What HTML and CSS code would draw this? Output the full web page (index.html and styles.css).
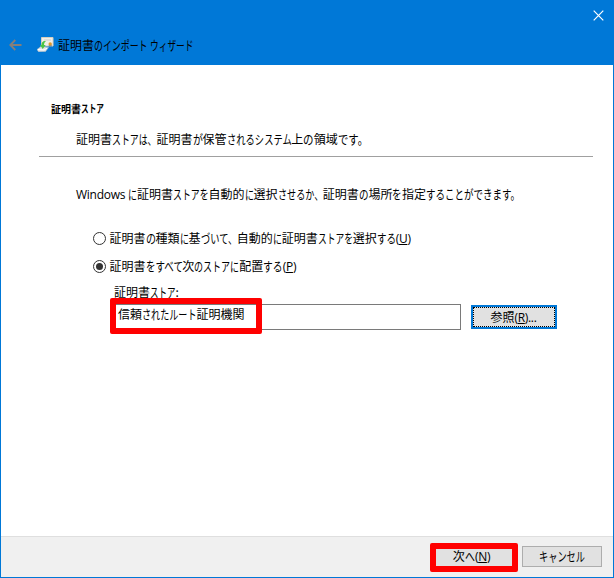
FILE: index.html
```html
<!DOCTYPE html>
<html lang="ja">
<head>
<meta charset="utf-8">
<title>証明書のインポート ウィザード</title>
<link rel="stylesheet" href="styles.css">
</head>
<body>
<div class="window">
  <header class="titlebar">
    <svg class="close" viewBox="0 0 11 11"><path d="M.7.7l9.6 9.6M10.3.7L.7 10.3"/></svg>
    <div class="caption">
      <svg class="back" viewBox="0 0 13 12"><path d="M12.5 6H1.5M6.3 1L1.3 6l5 5"/></svg>
      <svg class="cert" viewBox="0 0 17 16">
        <path d="M4.500 1.500h11.500v8.500H4.500z" fill="#f1efe8" stroke="#d6cfc0"/>
        <path d="M7 4h7" stroke="#d0cfca"/>
        <path d="M12 8.500l-.5 2.500h3.500l-.5-2.500z" fill="#5b8fb5"/>
        <circle cx="13.200" cy="8" r="1.700" fill="#e0992a"/>
        <path d="M0 13.500l4-3 7.500 1-3 4-7 .2z" fill="#dfe3e6" stroke="#b8c0c6" stroke-width=".5"/>
        <path d="M1 13.500l6 .5 3-1.800" fill="none" stroke="#fff"/>
        <path d="M8 5C5.500 5 4.500 7 4.500 9H3l2.700 4 3-4H7C7 7.500 7.300 6.300 9 5.300z" fill="#4cc446"/>
      </svg>
      <div class="text">証明書<span class="kana" style="--n:6;--w:53.5">のインポート</span> <span class="kana" style="--n:5;--w:43.5">ウィザード</span></div>
    </div>
  </header>
  <main class="page">
    <h1 class="text heading">証明書<span class="kana" style="--n:3;--w:23">ストア</span></h1>
    <p class="text summary">証明書<span class="kana" style="--n:5;--w:44.5">ストアは、</span>証明書<span class="kana" style="--n:1;--w:10">が</span>保管<span class="kana" style="--n:7;--w:65">されるシステム</span>上<span class="kana" style="--n:1;--w:10.5">の</span>領域<span class="kana" style="--n:3;--w:31">です。</span></p>
    <hr class="rule">
    <p class="text lead"><span class="windows">Windows</span><span class="kana" style="--n:1;--w:9">に</span>証明書<span class="kana" style="--n:4;--w:35.5">ストアを</span>自動的<span class="kana" style="--n:1;--w:9">に</span>選択<span class="kana" style="--n:5;--w:45.5">させるか、</span>証明書<span class="kana" style="--n:1;--w:9.5">の</span>場所<span class="kana" style="--n:1;--w:9.5">を</span>指定<span class="kana" style="--n:10;--w:95">することができます。</span></p>
    <div class="options">
      <label class="option"><span class="radio"></span><span class="text">証明書<span class="kana" style="--n:1;--w:10">の</span>種類<span class="kana" style="--n:1;--w:9">に</span>基<span class="kana" style="--n:4;--w:37">づいて、</span>自動的<span class="kana" style="--n:1;--w:9">に</span>証明書<span class="kana" style="--n:4;--w:35">ストアを</span>選択<span class="kana" style="--n:2;--w:19">する</span><span class="key">(<u>U</u>)</span></span></label>
      <label class="option"><span class="radio checked"></span><span class="text">証明書<span class="kana" style="--n:4;--w:38">をすべて</span>次<span class="kana" style="--n:5;--w:45">のストアに</span>配置<span class="kana" style="--n:2;--w:19.5">する</span><span class="key">(<u>P</u>)</span></span></label>
    </div>
    <div class="store">
      <div class="text store-label">証明書<span class="kana" style="--n:3;--w:25.5">ストア</span>:</div>
      <div class="row">
        <div class="field"><span class="text">信頼<span class="kana" style="--n:6;--w:54.5">されたルート</span>証明機関</span><span class="mark mark-field"></span></div>
        <div class="button browse"><span class="text">参照<span class="key">(<u>R</u>)...</span></span></div>
      </div>
    </div>
  </main>
  <footer class="actions">
    <div class="button next"><span class="text">次<span class="kana" style="--n:1;--w:10">へ</span><span class="key">(<u>N</u>)</span></span><span class="mark mark-next"></span></div>
    <div class="button"><span class="text"><span class="kana" style="--n:5;--w:46">キャンセル</span></span></div>
  </footer>
</div>
</body>
</html>
```
FILE: styles.css
```css
* { box-sizing: border-box; }
body { margin: 0; font-family: "Open Sans", "Noto Sans CJK JP", sans-serif; font-size: 12px; color: #000; }
.window { --size: 12; width: 614px; height: 578px; display: flex; flex-direction: column; background: #fff; border: 1px solid #0078d7; border-top: 0; }
.text { margin: 0; font-family: "Noto Sans CJK JP", sans-serif; font-size: 12px; font-weight: 400; line-height: 18px; height: 18px; white-space: nowrap; }
.kana { display: inline-block; line-height: 18px; transform-origin: 0 50%; transform: scale(calc(var(--w) / (var(--n) * var(--size))), 1.08); margin-right: calc((var(--w) - var(--n) * var(--size)) * 1px); }
.key { font-family: "Open Sans", sans-serif; letter-spacing: -0.3px; }
u { text-underline-offset: 1px; text-decoration-thickness: 1px; }

.titlebar { height: 65px; flex: none; background: #0078d7; display: flex; flex-direction: column; padding: 10px 9px 0 8px; }
.close { width: 11px; height: 11px; align-self: flex-end; fill: none; stroke: #fff; stroke-width: 1.2; }
.caption { display: flex; align-items: center; margin-top: 15px; height: 18px; }
.back { width: 13px; height: 12px; fill: none; stroke: #857f7a; stroke-width: 1.8; }
.cert { width: 17px; height: 16px; margin: -2px 4px 0 15px; }

.page { flex: 1; padding: 35px 20px 0 38px; }
.heading { --size: 10; font-size: 10px; font-weight: 700; margin-left: 12px; }
.summary { margin: 12px 0 0 37px; }
.rule { height: 1px; border: 0; background: #a0a0a0; margin: 8px 0 0; }
.lead { margin: 28px 0 0 37px; }
.windows { display: inline-block; width: 52px; font-family: "Open Sans", sans-serif; letter-spacing: -0.25px; }
.options { margin: 26px 0 0 54px; display: flex; flex-direction: column; gap: 10px; }
.option { display: flex; align-items: center; gap: 3.5px; height: 18px; }
.radio { width: 13px; height: 13px; border: 1px solid #333; border-radius: 50%; display: grid; place-items: center; }
.checked::after { content: ""; width: 7px; height: 7px; border-radius: 50%; background: #333; }
.store { margin: 8px 0 0 75px; }
.row { display: flex; align-items: flex-start; gap: 10px; margin-top: 3px; }
.field { position: relative; width: 347px; height: 26px; border: 1px solid #7a7a7a; padding: 0 3px; }
.field .text { display: block; }
.button { position: relative; display: flex; align-items: center; justify-content: center; width: 80px; height: 21px; background: #e1e1e1; border: 1px solid #adadad; }
.button .text { margin-top: -1px; }
.browse { width: 86px; height: 24px; border: 2px solid #0078d7; outline: 1px dotted #000; outline-offset: -3px; margin-top: 1px; padding-right: 1px; }
.mark { position: absolute; border: 6px solid #f00; border-radius: 2px; pointer-events: none; }
.mark-field { left: -5px; top: -7px; width: 152px; height: 36px; }
.mark-next { left: -6px; top: -4px; width: 88px; height: 29px; }

.actions { height: 41px; flex: none; background: #f0f0f0; border-top: 1px solid #dfdfdf; display: flex; justify-content: flex-end; align-items: flex-start; gap: 9px; padding: 9px 11px 0; }
.next { width: 78px; border-color: #0078d7; padding-right: 5px; }
```
